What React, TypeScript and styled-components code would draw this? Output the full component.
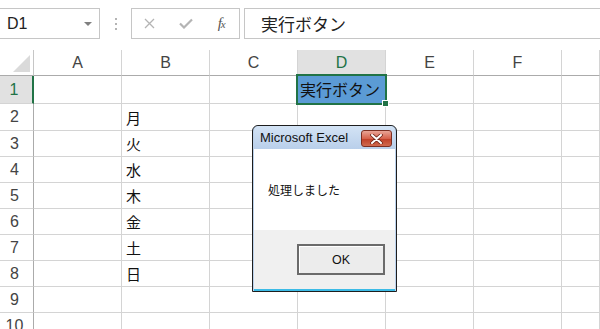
import styled, { createGlobalStyle } from "styled-components";

const GlobalStyle = createGlobalStyle`
  html, body {
    margin: 0;
    padding: 0;
    background: #ffffff;
    overflow: hidden;
  }
  body {
    font-family: "Liberation Sans", "Noto Sans CJK JP", sans-serif;
    color: #222;
  }
`;

const GREEN = "#217346";
const GRID = "#d4d4d4";

const Page = styled.div`
  position: relative;
  width: 600px;
  height: 329px;
  overflow: hidden;
  background: #fff;
`;

const FormulaBar = styled.div`
  display: flex;
  height: 50px;
  box-sizing: border-box;
  padding: 8px 0 11px;
`;

const NameBox = styled.div`
  width: 101px;
  margin-left: -1px;
  box-sizing: border-box;
  border: 1px solid #c6c6c6;
  display: flex;
  align-items: center;
  justify-content: space-between;
  padding: 0 7px 0 7px;
  font-size: 16px;
  color: #222;
`;

const Caret = styled.span`
  width: 0;
  height: 0;
  border-left: 4px solid transparent;
  border-right: 4px solid transparent;
  border-top: 4px solid #808080;
`;

const Grip = styled.div`
  width: 31px;
  display: flex;
  flex-direction: column;
  align-items: center;
  justify-content: center;
  gap: 3px;
`;

const GripDot = styled.span`
  width: 2px;
  height: 2px;
  background: #b4b4b4;
`;

const ButtonGroup = styled.div`
  width: 109px;
  box-sizing: border-box;
  border: 1px solid #c6c6c6;
  display: flex;
`;

const IconSlot = styled.div`
  flex: 1;
  display: flex;
  align-items: center;
  justify-content: center;
`;

const Fx = styled.span`
  font-family: "Liberation Serif", serif;
  font-style: italic;
  font-size: 15px;
  color: #555;
  letter-spacing: -1px;
  small {
    font-size: 11px;
  }
`;

const FormulaInput = styled.div`
  flex: 1;
  margin-left: 4px;
  border: 1px solid #c6c6c6;
  border-right: none;
  display: flex;
  align-items: center;
  padding-left: 16px;
  font-family: "Noto Sans CJK JP", sans-serif;
  font-size: 17px;
  color: #222;
`;

const Sheet = styled.div`
  display: grid;
  grid-template-columns: 34px repeat(6, 88px) 1fr;
  grid-template-rows: 26px 28px 27px repeat(8, 26px);
`;

const Corner = styled.div`
  box-sizing: border-box;
  border-right: 1px solid #c6c6c6;
  border-bottom: 1px solid #ababab;
  display: flex;
  align-items: flex-end;
  justify-content: flex-end;
  padding: 0 3px 3px 0;
`;

const CornerTriangle = styled.span`
  width: 0;
  height: 0;
  border-left: 17px solid transparent;
  border-bottom: 17px solid #dadada;
`;

const ColHeader = styled.div<{ $active?: boolean }>`
  box-sizing: border-box;
  border-right: 1px solid ${GRID};
  border-bottom: 1px solid #ababab;
  background: ${(p) => (p.$active ? "#e1e1e1" : "#fff")};
  color: ${(p) => (p.$active ? GREEN : "#444")};
  display: flex;
  align-items: center;
  justify-content: center;
  font-size: 16px;
`;

const RowHeader = styled.div<{ $active?: boolean }>`
  box-sizing: border-box;
  border-bottom: 1px solid ${GRID};
  border-right: ${(p) => (p.$active ? `2px solid ${GREEN}` : "1px solid #ababab")};
  background: ${(p) => (p.$active ? "#e1e1e1" : "#fff")};
  color: ${(p) => (p.$active ? GREEN : "#444")};
  display: flex;
  align-items: center;
  justify-content: center;
  padding-right: 4px;
  font-size: 16px;
`;

const Cell = styled.div<{ $selected?: boolean }>`
  position: relative;
  box-sizing: border-box;
  border-right: 1px solid ${GRID};
  border-bottom: 1px solid ${GRID};
  display: flex;
  align-items: center;
  padding-left: 4px;
  font-family: "Noto Sans CJK JP", sans-serif;
  font-size: 15px;
  color: #111;
  white-space: nowrap;
  ${(p) =>
    p.$selected &&
    `
    background: #5b9bd5;
    outline: 2px solid ${GREEN};
    outline-offset: -1px;
    margin: -1px 0 0 -1px;
    font-size: 16px;
    padding-left: 3px;
    z-index: 1;
  `}
`;

const FillHandle = styled.span`
  position: absolute;
  right: -4px;
  bottom: -4px;
  width: 5px;
  height: 5px;
  background: ${GREEN};
  border: 1px solid #fff;
`;

const Dialog = styled.div`
  position: absolute;
  left: 252px;
  top: 125px;
  width: 145px;
  height: 167px;
  box-sizing: border-box;
  border: 1px solid #1e1e1e;
  border-radius: 6px 6px 0 0;
  background: #bcd2ec;
  padding: 0 1px;
  display: flex;
  flex-direction: column;
  z-index: 5;
`;

const TitleBar = styled.div`
  height: 23px;
  display: flex;
  align-items: center;
  padding-left: 6px;
  border-radius: 5px 5px 0 0;
  background: linear-gradient(#d3e3f5, #b9cfea);
  font-size: 13px;
  color: #111;
`;

const CloseButton = styled.div`
  margin-left: auto;
  margin-right: 3px;
  margin-top: 2px;
  width: 31px;
  height: 17px;
  box-sizing: border-box;
  border: 1px solid #7c2f22;
  border-radius: 3px;
  background: linear-gradient(#e8a597 0%, #d6624c 50%, #c0412a 55%, #cf6a4f 100%);
  display: flex;
  align-items: center;
  justify-content: center;
`;

const MessageArea = styled.div`
  height: 81px;
  background: #fff;
  display: flex;
  align-items: center;
  padding-left: 14px;
  font-family: "Noto Sans CJK JP", sans-serif;
  font-size: 12px;
  color: #111;
`;

const Footer = styled.div`
  flex: 1;
  background: #f0f0f0;
  border-bottom: 2px solid #3cbbe6;
  display: flex;
  justify-content: flex-end;
  align-items: flex-start;
  padding: 14px 10px 0 0;
`;

const OkButton = styled.div`
  width: 88px;
  height: 31px;
  box-sizing: border-box;
  border: 2px solid #6b6b6b;
  box-shadow: inset 1px 1px 0 #fff;
  background: #ececec;
  display: flex;
  align-items: center;
  justify-content: center;
  font-size: 12.5px;
  color: #111;
`;

const columns = ["A", "B", "C", "D", "E", "F", ""];
const days = ["月", "火", "水", "木", "金", "土", "日"];

export default function App() {
  const rows = Array.from({ length: 10 }, (_, i) => i + 1);
  return (
    <Page>
      <GlobalStyle />
      <FormulaBar>
        <NameBox>
          D1
          <Caret />
        </NameBox>
        <Grip>
          <GripDot />
          <GripDot />
          <GripDot />
        </Grip>
        <ButtonGroup>
          <IconSlot>
            <svg width="11" height="11" viewBox="0 0 11 11">
              <path d="M1 1L10 10M10 1L1 10" stroke="#b4b4b4" strokeWidth="1.3" />
            </svg>
          </IconSlot>
          <IconSlot>
            <svg width="14" height="11" viewBox="0 0 14 11">
              <path d="M1 5.5L5 9.5L13 1.5" stroke="#b4b4b4" strokeWidth="2.2" fill="none" />
            </svg>
          </IconSlot>
          <IconSlot>
            <Fx>
              f<small>x</small>
            </Fx>
          </IconSlot>
        </ButtonGroup>
        <FormulaInput>実行ボタン</FormulaInput>
      </FormulaBar>
      <Sheet>
        <Corner>
          <CornerTriangle />
        </Corner>
        {columns.map((c) => (
          <ColHeader key={c || "G"} $active={c === "D"}>
            {c}
          </ColHeader>
        ))}
        {rows.map((r) => (
          <Row key={r} row={r} />
        ))}
      </Sheet>
      <Dialog>
        <TitleBar>
          Microsoft Excel
          <CloseButton>
            <svg width="13" height="10" viewBox="0 0 13 10">
              <path
                d="M2 1L11 9M11 1L2 9"
                stroke="#6b2418"
                strokeWidth="3.6"
                strokeLinecap="round"
              />
              <path
                d="M2 1L11 9M11 1L2 9"
                stroke="#fff"
                strokeWidth="2"
                strokeLinecap="round"
              />
            </svg>
          </CloseButton>
        </TitleBar>
        <MessageArea>処理しました</MessageArea>
        <Footer>
          <OkButton>OK</OkButton>
        </Footer>
      </Dialog>
    </Page>
  );
}

const Row = ({ row }: { row: number }) => {
  const day = row >= 2 && row <= 8 ? days[row - 2] : "";
  return (
    <>
      <RowHeader $active={row === 1}>{row}</RowHeader>
      {columns.map((c, i) => {
        if (row === 1 && c === "D") {
          return (
            <Cell key={i} $selected>
              実行ボタン
              <FillHandle />
            </Cell>
          );
        }
        return <Cell key={i}>{c === "B" ? day : ""}</Cell>;
      })}
    </>
  );
};
